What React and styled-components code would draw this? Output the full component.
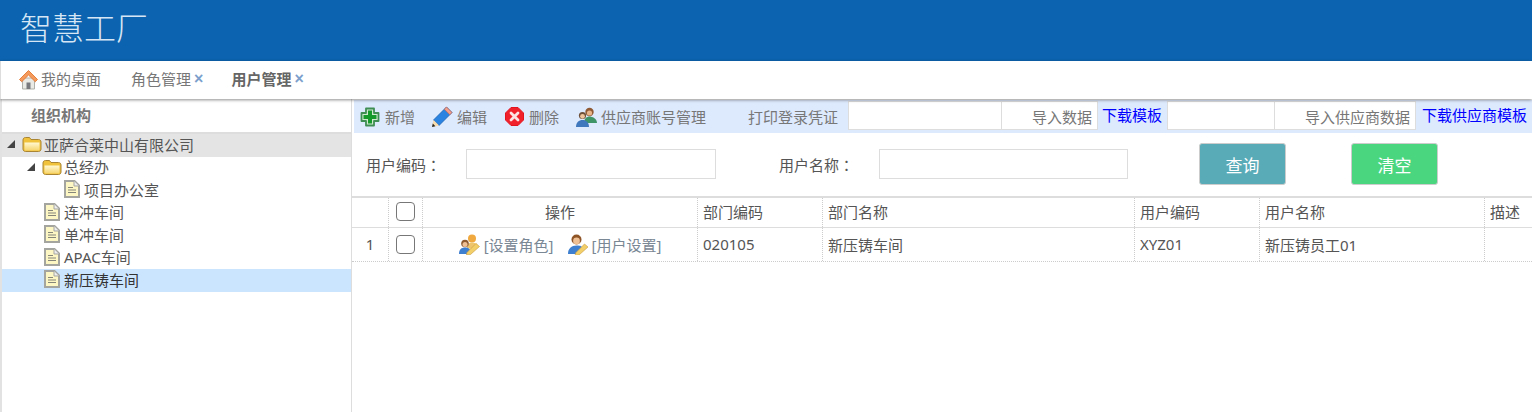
import styled, { createGlobalStyle } from 'styled-components';

const FONT = `"Noto Sans", "Noto Sans CJK SC", sans-serif`;

const GlobalStyle = createGlobalStyle`
  html, body {
    margin: 0;
    padding: 0;
    height: 412px;
    overflow: hidden;
    background: #fff;
    font-family: ${FONT};
    font-size: 15px;
    color: #555;
  }
  * { box-sizing: border-box; }
`;

const Page = styled.div`
  display: flex;
  flex-direction: column;
  height: 412px;
`;

const Header = styled.header`
  height: 61px;
  flex: none;
  background: #0c63af;
  padding-left: 20px;
  color: #d6e6f5;
  font-size: 32px;
  font-weight: 300;
  line-height: 56px;
`;

const TabBar = styled.nav`
  position: relative;
  z-index: 2;
  flex: none;
  height: 38px;
  display: flex;
  align-items: center;
  padding-left: 17px;
  background: #fff;
  border-left: 1px solid #ddd;
  box-shadow: 0 1px 3px rgba(0, 0, 0, 0.45);
`;

const Tab = styled.div`
  display: flex;
  align-items: center;
  height: 100%;
  margin-right: ${(p) => p.$gap}px;
  color: ${(p) => (p.$active ? '#666' : '#777')};
  font-weight: ${(p) => (p.$active ? 700 : 400)};
  line-height: 20px;
  padding-bottom: 2px;
`;

const TabClose = styled.span`
  margin-left: 3px;
  color: #7c9fcc;
  font-family: "Liberation Sans", sans-serif;
  font-size: 16px;
  font-weight: 700;
`;

const Body = styled.div`
  flex: 1;
  display: flex;
  min-height: 0;
`;

const Side = styled.aside`
  width: 352px;
  flex: none;
  border-left: 2px solid #e2e2e2;
  border-right: 1px solid #ddd;
`;

const SideTitle = styled.div`
  height: 35px;
  padding-left: 29px;
  border-bottom: 2px solid #ddd;
  color: #777;
  font-weight: 700;
  line-height: 33px;
`;

const TreeRow = styled.div`
  display: flex;
  align-items: center;
  height: 22.5px;
  padding-left: ${(p) => p.$level * 20}px;
  padding-bottom: 2px;
  color: ${(p) => (p.$selected ? '#333' : '#555')};
  background: ${(p) => (p.$selected ? '#cbe5ff' : p.$hover ? '#e4e4e4' : 'transparent')};
  white-space: nowrap;
`;

const Toggle = styled.span`
  width: 20px;
  flex: none;
  display: flex;
  padding-left: 5px;
`;

const TreeIcon = styled.span`
  width: 22px;
  flex: none;
  display: flex;
  padding-left: ${(p) => (p.$leaf ? 2 : 0)}px;
`;

const Main = styled.main`
  flex: 1;
  min-width: 0;
`;

const Toolbar = styled.div`
  height: 33px;
  margin: 1px 0 0 2px;
  display: flex;
  align-items: center;
  background: #dde9fd;
  color: #777;
  white-space: nowrap;
`;

const ToolButton = styled.div`
  display: flex;
  align-items: center;
  gap: ${(p) => p.$gap}px;
  margin-left: ${(p) => p.$left}px;
`;

const PrintLabel = styled.span`
  margin-left: 42px;
  margin-right: 10px;
`;

const ImportGroup = styled.div`
  display: flex;
  height: 29px;
  margin-top: -2px;
  background: #fff;
  border: 1px solid #ddd;
  flex: none;
  width: ${(p) => p.$width}px;
`;

const ImportInput = styled.div`
  width: ${(p) => p.$width}px;
  flex: none;
  border-right: 1px solid #ddd;
`;

const ImportLabel = styled.div`
  flex: 1;
  text-align: right;
  padding-right: 5px;
  line-height: 30px;
`;

const TemplateLink = styled.a`
  color: #00f;
  margin-left: ${(p) => p.$left}px;
  margin-right: ${(p) => p.$right}px;
  margin-top: -5px;
`;

const SearchRow = styled.div`
  height: 63px;
  display: flex;
  align-items: flex-start;
  padding-left: 14px;
  color: #555;
`;

const FieldLabel = styled.label`
  width: ${(p) => p.$width}px;
  flex: none;
  margin-top: 22px;
  line-height: 20px;
`;

// the TC cut centres the full-width colon, as the reference does
const Colon = styled.span`
  font-family: "Noto Sans CJK TC", sans-serif;
`;

const TextBox = styled.div`
  width: ${(p) => p.$width}px;
  height: 30px;
  flex: none;
  margin-top: 16px;
  margin-right: ${(p) => p.$right}px;
  border: 1px solid #ddd;
  background: #fff;
`;

const ActionButton = styled.button`
  width: 87px;
  height: 42px;
  margin-top: 10px;
  margin-right: 65px;
  padding: 0;
  border: 1px solid #ccc;
  border-radius: 3px;
  background: ${(p) => p.$bg};
  color: #fff;
  font-family: ${FONT};
  font-size: 17px;
`;

const GRID_COLUMNS = '37px 34px 275px 125px 312px 125px 225px 1fr';

const GridRow = styled.div`
  display: grid;
  grid-template-columns: ${GRID_COLUMNS};
  height: ${(p) => p.$height}px;
  border-top: ${(p) => (p.$head ? '2px solid #ddd' : 'none')};
  border-bottom: ${(p) => (p.$head ? '1px solid #ddd' : '1px dotted #ccc')};
`;

const Cell = styled.div`
  display: flex;
  align-items: center;
  justify-content: ${(p) => (p.$center ? 'center' : 'flex-start')};
  padding-left: ${(p) => (p.$center ? 0 : 5)}px;
  padding-bottom: ${(p) => (p.$head ? 2 : 1)}px;
  border-right: ${(p) => (p.$last ? 'none' : '1px dotted #ccc')};
  color: #555;
  white-space: nowrap;
  overflow: hidden;
`;

const Check = styled.span`
  width: 19px;
  height: 19px;
  border: 1px solid #777;
  border-radius: 4px;
  background: #fff;
`;

const OpLink = styled.a`
  display: flex;
  align-items: center;
  gap: 4px;
  color: #7a8794;
  margin-left: ${(p) => p.$left}px;
`;

const Arrow = () => (
  <svg width="8" height="8" viewBox="0 0 8 8">
    <path d="M8 0V8H0Z" fill="#444" />
  </svg>
);

const HomeIcon = () => (
  <svg width="21" height="21" viewBox="0 0 21 21" style={{ marginRight: 2, flex: 'none' }}>
    <path d="M4.500 9h12v11h-12z" fill="#e9e9e6" stroke="#b0b0aa" />
    <path d="M8.500 13.500h4V20h-4z" fill="#77797c" />
    <path d="M10.500 1.500 1.500 10.500l2.200 2.200 6.800-6.700 6.800 6.700 2.200-2.200z" fill="#f39a5c" stroke="#e57f3c" strokeLinejoin="round" />
  </svg>
);

const PlusIcon = () => (
  <svg width="20" height="20" viewBox="0 0 20 20">
    <path d="M6 1.500h8V6h4.500v8H14v4.500H6V14H1.500V6H6z" fill="#cfe9cf" stroke="#3f8f55" strokeWidth="1.800" strokeLinejoin="round" />
    <path d="M8 3.500h4V8h4.500v4H12v4.500H8V12H3.500V8H8z" fill="#149a2a" />
  </svg>
);

const PencilIcon = () => (
  <svg width="22" height="22" viewBox="0 0 22 22">
    <path d="M15.500 1 21 6.500 8 19.500 2.500 14z" fill="#2a83e0" stroke="#1c62b4" strokeWidth="0.8" />
    <path d="M15.500 1 21 6.500 18.800 8.700 13.300 3.200z" fill="#f0a08c" stroke="#c9604a" strokeWidth="0.6" />
    <path d="M2.500 14 8 19.500 1 21z" fill="#f6dcae" />
    <path d="M1.800 17.600 4.400 20.200 1 21z" fill="#222" />
  </svg>
);

const DeleteIcon = () => (
  <svg width="19" height="19" viewBox="0 0 19 19">
    <path d="M6 .5h7L18.500 6v7L13 18.500H6L.5 13V6z" fill="#f0212b" stroke="#e2151f" strokeLinejoin="round" />
    <path d="m6 6 7 7M13 6l-7 7" stroke="#fbe3e3" strokeWidth="2.800" strokeLinecap="round" />
  </svg>
);

const UsersIcon = () => (
  <svg width="21" height="20" viewBox="0 0 21 20">
    <circle cx="13.500" cy="5" r="4.200" fill="#8f5a34" />
    <circle cx="13.500" cy="6" r="2.600" fill="#e8b48a" />
    <path d="M8 16c0-4.500 3-6.500 5.500-6.500S21 11.500 21 16z" fill="#3f9468" />
    <circle cx="6.500" cy="8.500" r="3.600" fill="#6e5038" />
    <circle cx="6.500" cy="9.300" r="2.400" fill="#edc49c" />
    <path d="M0 20c0-4.500 3-7 6.500-7s6.500 2.500 6.500 7z" fill="#3f78bc" />
  </svg>
);

const RoleIcon = () => (
  <svg width="21" height="21" viewBox="0 0 21 21">
    <circle cx="13" cy="4.500" r="4" fill="#efa93f" />
    <path d="M8 14c0-3.500 2.500-5.500 5-5.500s5 1 6 3l-4 4z" fill="#eec46c" />
    <circle cx="6" cy="9.500" r="3.800" fill="#8e5a30" />
    <circle cx="6" cy="10.500" r="2.500" fill="#f0c095" />
    <path d="M0 20c0-4.500 2.500-6.500 6-6.500s4 1 5 2l-2 4.500z" fill="#3f7fd0" />
    <path d="m8 18.500 9-9 3.500 3-9 8-4 .5z" fill="#f3cf6a" stroke="#c99a3a" strokeWidth="0.6" />
  </svg>
);

const UserEditIcon = () => (
  <svg width="21" height="21" viewBox="0 0 21 21">
    <circle cx="9.500" cy="5.500" r="5" fill="#8e5426" />
    <circle cx="9.500" cy="7" r="3.400" fill="#f0c095" />
    <path d="M1 20c0-5.500 3.500-8.500 8.500-8.500s5 1 6 2l-4 6.500z" fill="#3f7fd0" />
    <path d="m9 18.500 8.500-8.500 3.500 3-9 8-4 .5z" fill="#f3cf6a" stroke="#c99a3a" strokeWidth="0.6" />
  </svg>
);

const FolderIcon = () => (
  <svg width="20" height="16" viewBox="0 0 20 16">
    <defs>
      <linearGradient id="folderFill" x1="0" y1="0" x2="0" y2="1">
        <stop offset="0" stopColor="#fff8d2" />
        <stop offset="1" stopColor="#f7d56e" />
      </linearGradient>
    </defs>
    <path d="M1 4c0-1.500 1-2.500 2.500-2.500h4L9 3.500h7.500C18 3.500 19 4.500 19 6v7c0 1.500-1 2.500-2.500 2.500h-13C2 15.500 1 14.500 1 13z" fill="#f0c23c" stroke="#a98432" />
    <path d="M2.500 6.500h15V13c0 1-.6 1.500-1.500 1.500H4c-1 0-1.500-.5-1.500-1.500z" fill="url(#folderFill)" />
  </svg>
);

const FileIcon = () => (
  <svg width="16" height="18" viewBox="0 0 16 18">
    <path d="M1 1h9.500L15 5.500V17H1z" fill="#fdf7c4" stroke="#a5a5a0" strokeWidth="2" />
    <path d="M10 1v5h5" fill="#eee" stroke="#a5a5a0" />
    <path d="M4 7.500h5M4 10h8M4 12.500h8" stroke="#85857a" />
  </svg>
);

const tree = [
  { name: '亚萨合莱中山有限公司', level: 0, open: true, folder: true, hover: true },
  { name: '总经办', level: 1, open: true, folder: true },
  { name: '项目办公室', level: 2 },
  { name: '连冲车间', level: 1 },
  { name: '单冲车间', level: 1 },
  { name: 'APAC车间', level: 1 },
  { name: '新压铸车间', level: 1, selected: true },
];

const App = () => (
  <Page>
    <GlobalStyle />
    <Header>智慧工厂</Header>
    <TabBar>
      <Tab $gap={30}>
        <HomeIcon />
        我的桌面
      </Tab>
      <Tab $gap={28}>
        角色管理
        <TabClose>×</TabClose>
      </Tab>
      <Tab $gap={0} $active>
        用户管理
        <TabClose>×</TabClose>
      </Tab>
    </TabBar>
    <Body>
      <Side>
        <SideTitle>组织机构</SideTitle>
        {tree.map((n) => (
          <TreeRow key={n.name} $level={n.level} $selected={n.selected} $hover={n.hover}>
            <Toggle>{n.open && <Arrow />}</Toggle>
            <TreeIcon $leaf={!n.folder}>{n.folder ? <FolderIcon /> : <FileIcon />}</TreeIcon>
            {n.name}
          </TreeRow>
        ))}
      </Side>
      <Main>
        <Toolbar>
          <ToolButton $left={6} $gap={5}>
            <PlusIcon />
            新增
          </ToolButton>
          <ToolButton $left={16} $gap={4}>
            <PencilIcon />
            编辑
          </ToolButton>
          <ToolButton $left={18} $gap={5}>
            <DeleteIcon />
            删除
          </ToolButton>
          <ToolButton $left={17} $gap={4}>
            <UsersIcon />
            供应商账号管理
          </ToolButton>
          <PrintLabel>打印登录凭证</PrintLabel>
          <ImportGroup $width={250}>
            <ImportInput $width={153} />
            <ImportLabel>导入数据</ImportLabel>
          </ImportGroup>
          <TemplateLink $left={4} $right={5}>下载模板</TemplateLink>
          <ImportGroup $width={249}>
            <ImportInput $width={107} />
            <ImportLabel>导入供应商数据</ImportLabel>
          </ImportGroup>
          <TemplateLink $left={6} $right={0}>下载供应商模板</TemplateLink>
        </Toolbar>
        <SearchRow>
          <FieldLabel $width={100}>用户编码<Colon>：</Colon></FieldLabel>
          <TextBox $width={250} $right={63} />
          <FieldLabel $width={100}>用户名称<Colon>：</Colon></FieldLabel>
          <TextBox $width={249} $right={71} />
          <ActionButton $bg="#5aabb8">查询</ActionButton>
          <ActionButton $bg="#4ad67f">清空</ActionButton>
        </SearchRow>
        <GridRow $head $height={32}>
          <Cell $center $head />
          <Cell $center $head>
            <Check />
          </Cell>
          <Cell $center $head>操作</Cell>
          <Cell $head>部门编码</Cell>
          <Cell $head>部门名称</Cell>
          <Cell $head>用户编码</Cell>
          <Cell $head>用户名称</Cell>
          <Cell $last $head>描述</Cell>
        </GridRow>
        <GridRow $height={34}>
          <Cell $center>1</Cell>
          <Cell $center>
            <Check />
          </Cell>
          <Cell $center>
            <OpLink $left={0}>
              <RoleIcon />
              [设置角色]
            </OpLink>
            <OpLink $left={13}>
              <UserEditIcon />
              [用户设置]
            </OpLink>
          </Cell>
          <Cell>020105</Cell>
          <Cell>新压铸车间</Cell>
          <Cell>XYZ01</Cell>
          <Cell>新压铸员工01</Cell>
          <Cell $last />
        </GridRow>
      </Main>
    </Body>
  </Page>
);

export default App;
